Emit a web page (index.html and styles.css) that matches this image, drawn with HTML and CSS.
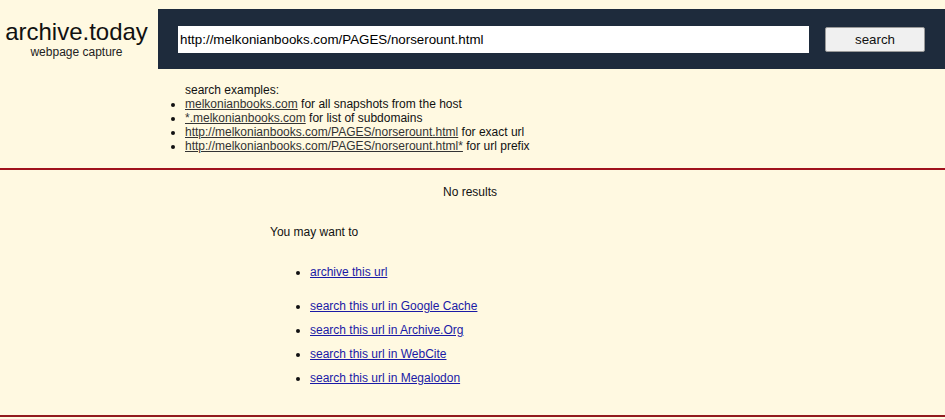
FILE: index.html
```html
<!DOCTYPE html>
<html>
<head>
<meta charset="utf-8">
<link rel="stylesheet" href="styles.css">
</head>
<body>
<div class="header">
  <div class="logo">
    <div class="logo-title">archive.today</div>
    <div class="logo-sub">webpage capture</div>
  </div>
  <div class="searchbar">
    <input class="url" type="text" value="http://melkonianbooks.com/PAGES/norserount.html">
    <button class="btn">search</button>
  </div>
</div>
<div class="examples">
  <div class="ex-title">search examples:</div>
  <ul class="ex-list">
    <li><a href="#">melkonianbooks.com</a> for all snapshots from the host</li>
    <li><a href="#">*.melkonianbooks.com</a> for list of subdomains</li>
    <li><a href="#">http://melkonianbooks.com/PAGES/norserount.html</a> for exact url</li>
    <li><a href="#">http://melkonianbooks.com/PAGES/norserount.html*</a> for url prefix</li>
  </ul>
</div>
<div class="rule"></div>
<div class="results">
  <div class="noresults">No results</div>
  <div class="maywant">You may want to</div>
  <ul class="actions">
    <li class="first"><a href="#">archive this url</a></li>
    <li><a href="#">search this url in Google Cache</a></li>
    <li><a href="#">search this url in Archive.Org</a></li>
    <li><a href="#">search this url in WebCite</a></li>
    <li><a href="#">search this url in Megalodon</a></li>
  </ul>
</div>
<div class="rule bottom"></div>
</body>
</html>
```
FILE: styles.css
```css
html, body {
  margin: 0;
  padding: 0;
  background: #fff9e1;
  font-family: "Liberation Sans", Arial, sans-serif;
  color: #111;
  font-size: 12px;
}
.header {
  display: flex;
  margin-top: 9px;
  height: 60px;
}
.logo {
  width: 153px;
  flex: none;
  text-align: center;
  padding-top: 11px;
}
.logo-title {
  font-size: 24px;
  line-height: 24px;
  color: #111;
}
.logo-sub {
  font-size: 12px;
  line-height: 14px;
  margin-top: 1px;
  color: #222;
}
.searchbar {
  margin-left: 5px;
  flex: 1;
  background: #1e2b3c;
  display: flex;
  align-items: center;
  padding-left: 20px;
}
.url {
  box-sizing: border-box;
  width: 631px;
  height: 27px;
  border: 0;
  margin: 0;
  padding: 0 2px;
  background: #fff;
  font-family: "Liberation Sans", Arial, sans-serif;
  font-size: 13.33px;
  color: #000;
  outline: none;
}
.btn {
  box-sizing: border-box;
  margin-left: 16px;
  width: 100px;
  height: 25px;
  background: #f0f0f0;
  border: 1px solid #999;
  border-radius: 2px;
  font-family: "Liberation Sans", Arial, sans-serif;
  font-size: 13.33px;
  color: #111;
  padding: 0;
}
.examples {
  padding-left: 185px;
  padding-top: 14px;
  height: 85px;
  line-height: 14px;
}
.ex-title {
  color: #111;
}
.ex-list {
  margin: 0;
  padding: 0;
}
.ex-list a {
  color: #333;
}
.rule {
  height: 2px;
  background: #a0121c;
}
.rule.bottom {
  background: #921a1e;
}
.results {
  height: 245px;
  box-sizing: border-box;
  padding-top: 15px;
  line-height: 14px;
}
.noresults {
  text-align: center;
  width: 940px;
}
.maywant {
  margin-top: 26px;
  padding-left: 270px;
}
.actions {
  margin: 26px 0 0 0;
  padding-left: 310px;
}
.actions li {
  margin-bottom: 10px;
}
.actions li.first {
  margin-bottom: 20px;
}
.actions a {
  color: #1a1aa6;
}
```
